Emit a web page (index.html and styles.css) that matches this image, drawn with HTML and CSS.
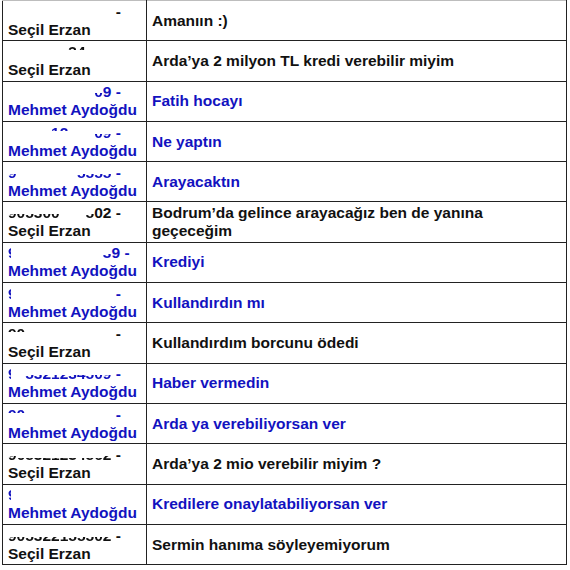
FILE: index.html
```
<!DOCTYPE html>
<html lang="tr">
<head>
<meta charset="utf-8">
<title>Mesajlar</title>
<link rel="stylesheet" href="styles.css">
</head>
<body>
<table class="log">
  <colgroup><col class="c-who"><col class="c-msg"></colgroup>
  <tbody>
    <tr class="row">
      <td class="who"><span class="num"><span class="x">905321234562</span> -</span><span class="name">Seçil Erzan</span></td>
      <td class="msg">Amanıın :)</td>
    </tr>
    <tr class="row">
      <td class="who"><span class="num"><span class="x">9053212</span><span class="top">34</span><span class="x">562 -</span></span><span class="name">Seçil Erzan</span></td>
      <td class="msg">Arda’ya 2 milyon TL kredi verebilir miyim</td>
    </tr>
    <tr class="row blue">
      <td class="who"><span class="num"><span class="x">9053212345</span><span class="bot">0</span>9 -</span><span class="name">Mehmet Aydoğdu</span></td>
      <td class="msg">Fatih hocayı</td>
    </tr>
    <tr class="row blue">
      <td class="who"><span class="num"><span class="x">90532</span><span class="top">12</span><span class="x">345</span><span class="bot">09</span> -</span><span class="name">Mehmet Aydoğdu</span></td>
      <td class="msg">Ne yaptın</td>
    </tr>
    <tr class="row blue">
      <td class="who"><span class="num"><span class="bot">9</span><span class="x">0532123</span><span class="bot">5555</span> -</span><span class="name">Mehmet Aydoğdu</span></td>
      <td class="msg">Arayacaktın</td>
    </tr>
    <tr class="row">
      <td class="who"><span class="num"><span class="bot">905300</span><span class="x">123</span><span class="bot">5</span>02 -</span><span class="name">Seçil Erzan</span></td>
      <td class="msg">Bodrum’da gelince arayacağız ben de yanına geçeceğim</td>
    </tr>
    <tr class="row blue">
      <td class="who"><span class="num"><span class="lft">9</span><span class="x">0532123450</span><span class="bot">3</span>9 -</span><span class="name">Mehmet Aydoğdu</span></td>
      <td class="msg">Krediyi</td>
    </tr>
    <tr class="row blue">
      <td class="who"><span class="num"><span class="lft">9</span><span class="x">05321234509</span> -</span><span class="name">Mehmet Aydoğdu</span></td>
      <td class="msg">Kullandırdın mı</td>
    </tr>
    <tr class="row">
      <td class="who"><span class="num"><span class="top">90</span><span class="x">5321234562</span> -</span><span class="name">Seçil Erzan</span></td>
      <td class="msg">Kullandırdım borcunu ödedi</td>
    </tr>
    <tr class="row blue">
      <td class="who"><span class="num"><span class="lft">9</span><span class="x">0</span><span class="bot">5321234509</span> -</span><span class="name">Mehmet Aydoğdu</span></td>
      <td class="msg">Haber vermedin</td>
    </tr>
    <tr class="row blue">
      <td class="who"><span class="num"><span class="top">90</span><span class="x">5321234509</span> -</span><span class="name">Mehmet Aydoğdu</span></td>
      <td class="msg">Arda ya verebiliyorsan ver</td>
    </tr>
    <tr class="row">
      <td class="who"><span class="num"><span class="bot">9</span><span class="low">0532123456</span><span class="bot">2</span> -</span><span class="name">Seçil Erzan</span></td>
      <td class="msg">Arda’ya 2 mio verebilir miyim ?</td>
    </tr>
    <tr class="row blue">
      <td class="who"><span class="num"><span class="lft">9</span><span class="x">05321234509 -</span></span><span class="name">Mehmet Aydoğdu</span></td>
      <td class="msg">Kredilere onaylatabiliyorsan ver</td>
    </tr>
    <tr class="row">
      <td class="who"><span class="num"><span class="bot">905322155502</span> -</span><span class="name">Seçil Erzan</span></td>
      <td class="msg">Sermin hanıma söyleyemiyorum</td>
    </tr>
  </tbody>
</table>
</body>
</html>
```

FILE: styles.css
```
html, body {
  margin: 0;
  padding: 0;
  background: #ffffff;
}

body {
  font-family: "Liberation Sans", Arial, sans-serif;
  font-weight: bold;
  font-size: 15.5px;
  line-height: 18px;
  color: #111111;
}

.row {
  --ink: #111111;
}

.row.blue {
  --ink: #1212bf;
  color: #1212bf;
}

.log {
  border-collapse: collapse;
  table-layout: fixed;
  width: 564px;
  margin-left: 2px;
}

.c-who { width: 144px; }
.c-msg { width: 420px; }

.log td {
  border: 1px solid #222222;
  height: 40.3px;
  box-sizing: border-box;
  padding: 0 5px;
  vertical-align: middle;
}

.log tr:first-child td {
  border-top-color: #bdbdbd;
}

.who {
  white-space: nowrap;
  overflow: hidden;
}

.num,
.name {
  display: block;
}

.x {
  color: transparent;
}

/* partially erased digits */
.bot,
.top,
.lft,
.low {
  color: transparent;
  -webkit-background-clip: text;
  background-clip: text;
}

.bot {
  background-image: linear-gradient(to bottom, transparent 56%, var(--ink) 56%);
}

.low {
  background-image: linear-gradient(to bottom, transparent 72%, var(--ink) 72%);
}

.top {
  background-image: linear-gradient(to bottom, var(--ink) 42%, transparent 42%);
}

.lft {
  background-image: linear-gradient(to right, var(--ink) 32%, transparent 32%);
}
```
